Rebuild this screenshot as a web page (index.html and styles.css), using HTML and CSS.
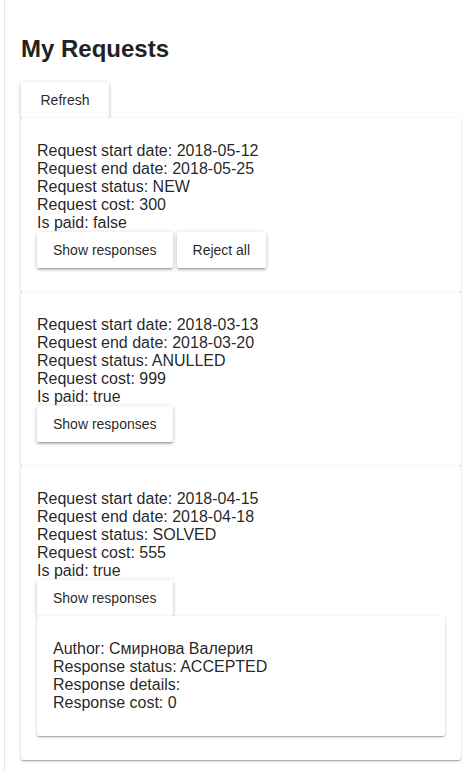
FILE: index.html
```html
<!DOCTYPE html>
<html>
<head>
<meta charset="utf-8">
<link rel="stylesheet" href="styles.css">
</head>
<body>
<div class="page">
  <h2 class="title">My Requests</h2>
  <div class="toolbar"><button class="btn btn-tab">Refresh</button></div>
  <div class="list">
    <div class="card">
      <div class="line">Request start date: 2018-05-12</div>
      <div class="line">Request end date: 2018-05-25</div>
      <div class="line">Request status: NEW</div>
      <div class="line">Request cost: 300</div>
      <div class="line">Is paid: false</div>
      <div class="actions">
        <button class="btn">Show responses</button>
        <button class="btn">Reject all</button>
      </div>
    </div>
    <div class="card">
      <div class="line">Request start date: 2018-03-13</div>
      <div class="line">Request end date: 2018-03-20</div>
      <div class="line">Request status: ANULLED</div>
      <div class="line">Request cost: 999</div>
      <div class="line">Is paid: true</div>
      <div class="actions">
        <button class="btn">Show responses</button>
      </div>
    </div>
    <div class="card">
      <div class="line">Request start date: 2018-04-15</div>
      <div class="line">Request end date: 2018-04-18</div>
      <div class="line">Request status: SOLVED</div>
      <div class="line">Request cost: 555</div>
      <div class="line">Is paid: true</div>
      <div class="actions">
        <button class="btn">Show responses</button>
      </div>
      <div class="response">
        <div class="line">Author: Смирнова Валерия</div>
        <div class="line">Response status: ACCEPTED</div>
        <div class="line">Response details:</div>
        <div class="line">Response cost: 0</div>
      </div>
    </div>
  </div>
</div>
</body>
</html>
```

FILE: styles.css
```css
html, body {
  margin: 0;
  padding: 0;
  background: #fff;
}
body {
  font-family: "Liberation Sans", Arial, sans-serif;
  color: rgba(0, 0, 0, 0.87);
}
.page {
  margin-left: 4px;
  border-left: 1px solid #e6e6e6;
  padding: 35px 1px 0 16px;
  min-height: 771px;
  box-sizing: border-box;
}
.title {
  margin: 0 0 19px;
  font-size: 24px;
  line-height: 28px;
  font-weight: bold;
  color: #222;
}
.toolbar {
  display: flex;
  height: 36px;
}
.btn {
  font-family: "Liberation Sans", Arial, sans-serif;
  font-size: 14px;
  color: rgba(0, 0, 0, 0.87);
  background: #fff;
  border: 0;
  border-radius: 2px;
  height: 36px;
  padding: 0 16px;
  margin: 0;
  box-shadow: 0 1px 5px 0 rgba(0, 0, 0, 0.2), 0 2px 2px 0 rgba(0, 0, 0, 0.14), 0 3px 1px -2px rgba(0, 0, 0, 0.12);
  cursor: pointer;
}
.btn-tab {
  height: 36px;
  min-width: 88px;
}
.list {
  display: flex;
  flex-direction: column;
}
.card {
  position: relative;
  background: #fff;
  padding: 24px 16px;
  border-radius: 2px;
  box-shadow: 0 1px 3px 0 rgba(0, 0, 0, 0.2), 0 1px 1px 0 rgba(0, 0, 0, 0.14), 0 2px 1px -1px rgba(0, 0, 0, 0.12);
}
.line {
  font-size: 16px;
  line-height: 18px;
  white-space: nowrap;
}
.actions {
  display: flex;
  gap: 4px;
}
.response {
  position: relative;
  background: #fff;
  padding: 24px 16px;
  border-radius: 2px;
  box-shadow: 0 1px 3px 0 rgba(0, 0, 0, 0.2), 0 1px 1px 0 rgba(0, 0, 0, 0.14), 0 2px 1px -1px rgba(0, 0, 0, 0.12);
}
```
